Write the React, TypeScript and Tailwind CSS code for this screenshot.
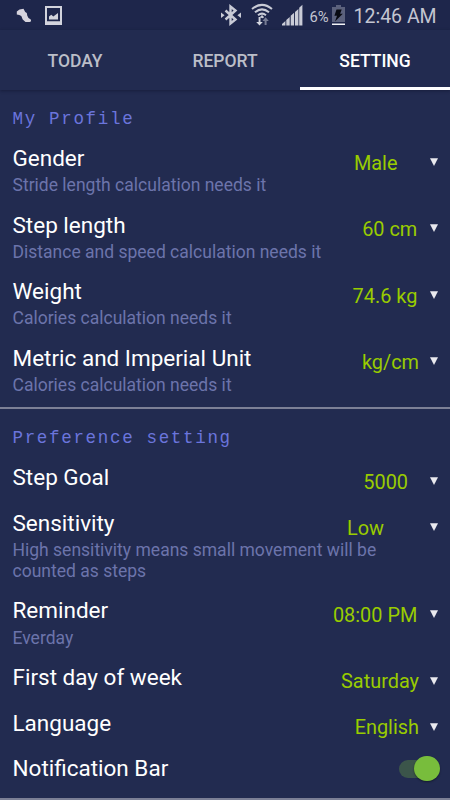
import React from 'react'

interface Setting {
  title: string
  note?: string
  value: string
  gap: string
}

const profile: Setting[] = [
  { title: 'Gender', note: 'Stride length calculation needs it', value: 'Male', gap: 'mr-[32.500px]' },
  { title: 'Step length', note: 'Distance and speed calculation needs it', value: '60 cm', gap: 'mr-[12.700px]' },
  { title: 'Weight', note: 'Calories calculation needs it', value: '74.6 kg', gap: 'mr-[12.700px]' },
  { title: 'Metric and Imperial Unit', note: 'Calories calculation needs it', value: 'kg/cm', gap: 'mr-[11px]' },
]

const preferences: Setting[] = [
  { title: 'Step Goal', value: '5000', gap: 'mr-[22px]' },
  {
    title: 'Sensitivity',
    note: 'High sensitivity means small movement will be counted as steps',
    value: 'Low',
    gap: 'mr-[46px]',
  },
  { title: 'Reminder', note: 'Everday', value: '08:00 PM', gap: 'mr-[12.700px]' },
  { title: 'First day of week', value: 'Saturday', gap: 'mr-[11px]' },
  { title: 'Language', value: 'English', gap: 'mr-[11px]' },
]

const StatusBar: React.FC = () => (
  <div className="flex h-[30px] items-start bg-[#1e264b] text-[#c3c5d1]">
    {/* Notifications */}
    <svg className="ml-4 h-[30px] w-[17px]" viewBox="16 0 17 30" fill="#d6d3dd">
      <path d="M16.800 11.500 19.500 9.500l4-.8 1.700 3.300 1.600 1 .5 2.800 1.200 2.200 2.300 1.600.3 1.600-1.400.8h-4.200L22.700 19.500l-1.400-3.500-2-1-2.500-.6z" />
    </svg>
    <svg className="ml-3 h-[30px] w-[17px]" viewBox="45 0 17 30">
      <path fill="#d2d3dc" fillRule="evenodd" d="M45 6h17v19H45zM47 8v13.200h13V8z" />
      <path fill="#d2d3dc" d="M49 19.500v-3l2.300-1.800 2 1.800 4.700-3.500v6.500z" />
    </svg>
    {/* System */}
    <svg className="ml-[158px] h-[30px] w-[22px]" viewBox="220 0 22 30">
      <path d="M225.500 10.500 235.500 19.500l-5 4V6.500l5 4-10 9" fill="none" stroke="#c9cbd6" strokeWidth="2.400" />
      <path d="M221 12.500l3.600 2.700-3.600 2.700zM241 12.500l-3.600 2.700 3.600 2.700z" fill="#c9cbd6" />
    </svg>
    <svg className="ml-[9px] h-[30px] w-[22px]" viewBox="251 0 22 30">
      <g fill="none" stroke="#c9cbd6" strokeWidth="2">
        <path d="M252 9Q262 .8 272 9" />
        <path d="M255 12.200Q262 6.500 269 12.200" />
        <path d="M258 15.200Q262 12 266 15.200" />
      </g>
      <path d="M259.700 17.200 262 15l2.200 2.200-1.700 1z" fill="#c9cbd6" />
      <path d="M258.600 17h1.900v5h2.300l-3.300 3.600-3.300-3.600h2.400z" fill="#d3d5de" />
      <path d="M264.600 25v-4h-2.200l3.200-3.800 3.200 3.800h-2.200v4z" fill="#777c94" />
    </svg>
    <svg className="ml-[9px] h-[30px] w-[21px]" viewBox="282 0 21 30" fill="#c9cbd6">
      <path d="M282 25.600v-1.600l3.400-3v4.600zM286.300 25.600v-5.700l3.400-3v8.700zM290.700 25.600V15.800l3.400-3v12.800zM295 25.600V11.900l3.400-3v16.700zM299.200 25.600V7.800l3.200-3v20.800z" />
    </svg>
    <span className="ml-[6.500px] mt-[8px] w-[21px] text-[14.800px] leading-[18px]">6%</span>
    <svg className="ml-[1.500px] h-[30px] w-[13px]" viewBox="332 0 13 30">
      <path d="M336 5h5v2h4v15h-13V7h4z" fill="#5b617d" />
      <path d="M332 23.500h13V25h-13z" fill="#f2f3f6" />
      <path d="M336.500 9.500h5.200l-1.600 4.300h2.700L335 21.500l2-5.700h-2.600z" fill="#080a12" />
    </svg>
    <span className="ml-[8.500px] mt-[5px] whitespace-nowrap text-[19.500px] leading-[24px]">12:46 AM</span>
  </div>
)

const Tabs: React.FC = () => (
  <div className="grid h-[60px] grid-cols-3 text-center text-[17.500px] font-medium leading-[62px] text-[#bbbec8] shadow-[0_1px_3px_rgba(10,14,35,0.45)]">
    <div className="h-[60px]">TODAY</div>
    <div className="h-[60px]">REPORT</div>
    <div className="h-[60px] border-b-[3px] border-white text-white">SETTING</div>
  </div>
)

const SectionTitle: React.FC<{ children: React.ReactNode }> = ({ children }) => (
  <h2 className="h-[45.400px] pl-[12.500px] pt-[19px] font-['Liberation_Mono',monospace] text-[17.500px] leading-5 tracking-[1.680px] text-[#6b75dc]">
    {children}
  </h2>
)

const Row: React.FC<{ item: Setting }> = ({ item }) => (
  <div className="flex items-start py-[9.700px] pl-[12.500px] pr-[12px]">
    <div className="w-0 grow">
      <div className="whitespace-nowrap text-[22.500px] leading-[26.400px] text-white">{item.title}</div>
      {item.note && (
        <div className="-mb-[3.800px] mt-[3.800px] w-[385px] text-[17.530px] leading-[20.700px] text-[#6c74ab]">
          {item.note}
        </div>
      )}
    </div>
    <div className="flex h-0 items-start">
      <span className={`mt-[6.600px] whitespace-nowrap text-[19.900px] leading-6 text-[#99cc00] ${item.gap}`}>
        {item.value}
      </span>
      <svg className="mt-[12.900px] h-[8px] w-[8px]" viewBox="0 0 8 8">
        <path d="M0 .3h8L4 8z" fill="#e9e9ee" />
      </svg>
    </div>
  </div>
)

const Divider: React.FC = () => <div className="mt-[6px] h-[2px] bg-[#7c8096]" />

export default function App() {
  return (
    <div className="h-[800px] w-[450px] overflow-hidden bg-[#222b50] font-['Roboto',sans-serif]">
      <StatusBar />
      <Tabs />
      <SectionTitle>My Profile</SectionTitle>
      {profile.map((item) => (
        <Row key={item.title} item={item} />
      ))}
      <Divider />
      <SectionTitle>Preference setting</SectionTitle>
      {preferences.map((item) => (
        <Row key={item.title} item={item} />
      ))}
      <div className="flex items-center justify-between py-[9.700px] pl-[12.500px] pr-[10.500px]">
        <div className="text-[22.500px] leading-[26.400px] text-white">Notification Bar</div>
        <div className="flex h-[18px] w-[41px] items-center justify-end rounded-full bg-[linear-gradient(to_right,#3b554a_80%,transparent_80%)]">
          <div className="size-[25.500px] shrink-0 rounded-full bg-[#78bd3c] shadow-[0_1px_2px_rgba(0,0,0,0.4)]" />
        </div>
      </div>
      <Divider />
    </div>
  )
}
